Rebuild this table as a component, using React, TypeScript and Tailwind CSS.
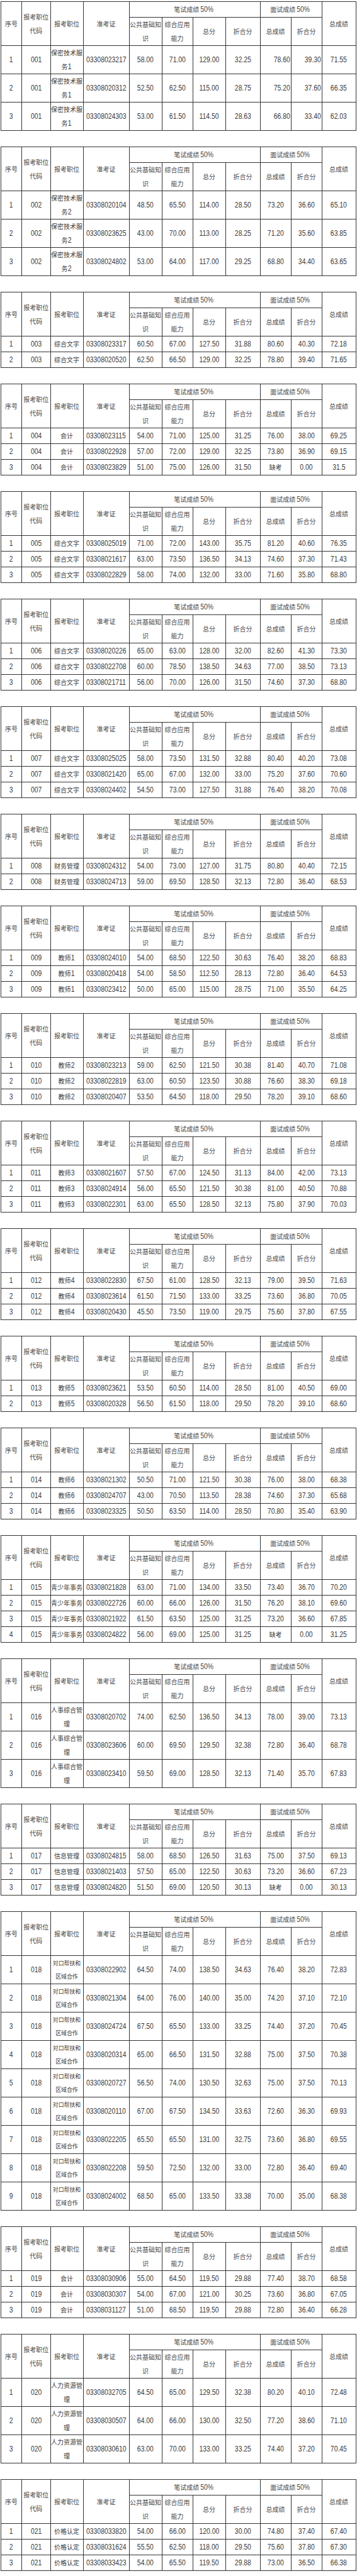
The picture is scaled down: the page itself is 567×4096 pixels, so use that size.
import React from "react";

type Row = string[];

const CJK = /([\u3400-\u9fff\uff00-\uffef]+)/;

function Txt({ s, small, right }: { s: string; small?: boolean; right?: boolean }) {
  const lines = s.split("\n");
  return (
    <>
      {lines.map((line, li) => (
        <React.Fragment key={li}>
          {li > 0 && <br />}
          {line.split(CJK).map((part, i) =>
            part === "" ? null : CJK.test(part) ? (
              <span
                key={i}
                className={
                  (small ? "text-[8.9px] " : "text-[10px] ") +
                  "font-['Noto_Sans_CJK_SC',sans-serif]"
                }
              >
                {part}
              </span>
            ) : (
              <span
                key={i}
                className={
                  "inline-block scale-x-[0.82] " + (right ? "origin-right" : "origin-center")
                }
              >
                {part}
              </span>
            )
          )}
        </React.Fragment>
      ))}
    </>
  );
}

function Cell({
  cls,
  right,
  children,
}: {
  cls: string;
  right?: boolean;
  children: React.ReactNode;
}) {
  return (
    <div
      className={
        cls +
        " flex items-center overflow-hidden whitespace-nowrap border-r border-b border-[#343434] " +
        (right ? "justify-end pr-[1px]" : "justify-center")
      }
    >
      <div className={right ? "text-right" : "text-center"}>{children}</div>
    </div>
  );
}

function ScoreTable({
  rows,
  pos,
  double,
  small,
  rightInterview,
}: {
  rows: Row[];
  pos: string;
  double?: boolean;
  small?: boolean;
  rightInterview?: boolean;
}) {
  const h = double ? "h-[45px]" : "h-[25px]";
  return (
    <div className="ml-[1px] w-[564.5px] grid grid-cols-[33px_45.5px_52px_73px_52px_49px_52px_55px_49px_49px_54px] border-l border-t border-[#343434] text-[12.7px] leading-[21px] text-[#3a3a3a] font-['Liberation_Sans',sans-serif]">
      <Cell cls="row-span-2 text-[#4a4a4a]">
        <Txt s="序号" />
      </Cell>
      <Cell cls="row-span-2 text-[#4a4a4a]">
        <Txt s={"报考职位\n代码"} />
      </Cell>
      <Cell cls="row-span-2 text-[#4a4a4a]">
        <Txt s="报考职位" />
      </Cell>
      <Cell cls="row-span-2 text-[#4a4a4a]">
        <Txt s="准考证" />
      </Cell>
      <Cell cls="col-span-4 h-[25px] text-[#4a4a4a]">
        <Txt s="笔试成绩50%" />
      </Cell>
      <Cell cls="col-span-2 h-[25px] text-[#4a4a4a]">
        <Txt s="面试成绩50%" />
      </Cell>
      <Cell cls="row-span-2 text-[#4a4a4a]">
        <Txt s="总成绩" />
      </Cell>
      <Cell cls="h-[45px] text-[#4a4a4a]">
        <Txt s={"公共基础知\n识"} />
      </Cell>
      <Cell cls="h-[45px] text-[#4a4a4a]">
        <Txt s={"综合应用\n能力"} />
      </Cell>
      <Cell cls="h-[45px] text-[#4a4a4a]">
        <Txt s="总分" />
      </Cell>
      <Cell cls="h-[45px] text-[#4a4a4a]">
        <Txt s="折合分" />
      </Cell>
      <Cell cls="h-[45px] text-[#4a4a4a]">
        <Txt s="总成绩" />
      </Cell>
      <Cell cls="h-[45px] text-[#4a4a4a]">
        <Txt s="折合分" />
      </Cell>
      {rows.map((r, i) => (
        <React.Fragment key={i}>
          <Cell cls={h}>
            <Txt s={r[0]} />
          </Cell>
          <Cell cls={h}>
            <Txt s={r[1]} />
          </Cell>
          <Cell cls={h}>
            <Txt s={pos} small={small} />
          </Cell>
          <Cell cls={h}>
            <Txt s={r[2]} />
          </Cell>
          <Cell cls={h}>
            <Txt s={r[3]} />
          </Cell>
          <Cell cls={h}>
            <Txt s={r[4]} />
          </Cell>
          <Cell cls={h}>
            <Txt s={r[5]} />
          </Cell>
          <Cell cls={h}>
            <Txt s={r[6]} />
          </Cell>
          <Cell cls={h} right={rightInterview}>
            <Txt s={r[7]} right={rightInterview} />
          </Cell>
          <Cell cls={h} right={rightInterview}>
            <Txt s={r[8]} right={rightInterview} />
          </Cell>
          <Cell cls={h}>
            <Txt s={r[9]} />
          </Cell>
        </React.Fragment>
      ))}
    </div>
  );
}

type T = { pos: string; double?: boolean; small?: boolean; right?: boolean; rows: Row[] };

const tables: T[] = [
  {
    pos: "保密技术服\n务1",
    double: true,
    right: true,
    rows: [
      ["1", "001", "03308023217", "58.00", "71.00", "129.00", "32.25", "78.60", "39.30", "71.55"],
      ["2", "001", "03308020312", "52.50", "62.50", "115.00", "28.75", "75.20", "37.60", "66.35"],
      ["3", "001", "03308024303", "53.00", "61.50", "114.50", "28.63", "66.80", "33.40", "62.03"],
    ],
  },
  {
    pos: "保密技术服\n务2",
    double: true,
    rows: [
      ["1", "002", "03308020104", "48.50", "65.50", "114.00", "28.50", "73.20", "36.60", "65.10"],
      ["2", "002", "03308023625", "43.00", "70.00", "113.00", "28.25", "71.20", "35.60", "63.85"],
      ["3", "002", "03308024802", "53.00", "64.00", "117.00", "29.25", "68.80", "34.40", "63.65"],
    ],
  },
  {
    pos: "综合文字",
    rows: [
      ["1", "003", "03308023317", "60.50", "67.00", "127.50", "31.88", "80.60", "40.30", "72.18"],
      ["2", "003", "03308020520", "62.50", "66.50", "129.00", "32.25", "78.80", "39.40", "71.65"],
    ],
  },
  {
    pos: "会计",
    rows: [
      ["1", "004", "03308023115", "54.00", "71.00", "125.00", "31.25", "76.00", "38.00", "69.25"],
      ["2", "004", "03308022928", "57.00", "72.00", "129.00", "32.25", "73.80", "36.90", "69.15"],
      ["3", "004", "03308023829", "51.00", "75.00", "126.00", "31.50", "缺考", "0.00", "31.5"],
    ],
  },
  {
    pos: "综合文字",
    rows: [
      ["1", "005", "03308025019", "71.00", "72.00", "143.00", "35.75", "81.20", "40.60", "76.35"],
      ["2", "005", "03308021617", "63.00", "73.50", "136.50", "34.13", "74.60", "37.30", "71.43"],
      ["3", "005", "03308022829", "58.00", "74.00", "132.00", "33.00", "71.60", "35.80", "68.80"],
    ],
  },
  {
    pos: "综合文字",
    rows: [
      ["1", "006", "03308020226", "65.00", "63.00", "128.00", "32.00", "82.60", "41.30", "73.30"],
      ["2", "006", "03308022708", "60.00", "78.50", "138.50", "34.63", "77.00", "38.50", "73.13"],
      ["3", "006", "03308021711", "56.00", "70.00", "126.00", "31.50", "74.60", "37.30", "68.80"],
    ],
  },
  {
    pos: "综合文字",
    rows: [
      ["1", "007", "03308025025", "58.00", "73.50", "131.50", "32.88", "80.40", "40.20", "73.08"],
      ["2", "007", "03308021420", "65.00", "67.00", "132.00", "33.00", "75.20", "37.60", "70.60"],
      ["3", "007", "03308024402", "54.50", "73.00", "127.50", "31.88", "76.40", "38.20", "70.08"],
    ],
  },
  {
    pos: "财务管理",
    rows: [
      ["1", "008", "03308024312", "54.00", "73.00", "127.00", "31.75", "80.80", "40.40", "72.15"],
      ["2", "008", "03308024713", "59.00", "69.50", "128.50", "32.13", "72.80", "36.40", "68.53"],
    ],
  },
  {
    pos: "教师1",
    rows: [
      ["1", "009", "03308024010", "54.00", "68.50", "122.50", "30.63", "76.40", "38.20", "68.83"],
      ["2", "009", "03308020418", "54.00", "58.50", "112.50", "28.13", "72.80", "36.40", "64.53"],
      ["3", "009", "03308023412", "50.00", "65.00", "115.00", "28.75", "71.00", "35.50", "64.25"],
    ],
  },
  {
    pos: "教师2",
    rows: [
      ["1", "010", "03308023213", "59.00", "62.50", "121.50", "30.38", "81.40", "40.70", "71.08"],
      ["2", "010", "03308022819", "63.00", "60.50", "123.50", "30.88", "76.60", "38.30", "69.18"],
      ["3", "010", "03308020407", "53.50", "64.50", "118.00", "29.50", "78.20", "39.10", "68.60"],
    ],
  },
  {
    pos: "教师3",
    rows: [
      ["1", "011", "03308021607", "57.50", "67.00", "124.50", "31.13", "84.00", "42.00", "73.13"],
      ["2", "011", "03308024914", "56.00", "65.50", "121.50", "30.38", "81.00", "40.50", "70.88"],
      ["3", "011", "03308022301", "63.00", "65.50", "128.50", "32.13", "75.80", "37.90", "70.03"],
    ],
  },
  {
    pos: "教师4",
    rows: [
      ["1", "012", "03308022830", "67.50", "61.00", "128.50", "32.13", "79.00", "39.50", "71.63"],
      ["2", "012", "03308023614", "61.50", "71.50", "133.00", "33.25", "73.60", "36.80", "70.05"],
      ["3", "012", "03308020430", "45.50", "73.50", "119.00", "29.75", "75.60", "37.80", "67.55"],
    ],
  },
  {
    pos: "教师5",
    rows: [
      ["1", "013", "03308023621", "53.50", "60.50", "114.00", "28.50", "81.00", "40.50", "69.00"],
      ["2", "013", "03308020328", "56.50", "61.50", "118.00", "29.50", "78.20", "39.10", "68.60"],
    ],
  },
  {
    pos: "教师6",
    rows: [
      ["1", "014", "03308021302", "50.50", "71.00", "121.50", "30.38", "76.00", "38.00", "68.38"],
      ["2", "014", "03308024707", "43.00", "70.50", "113.50", "28.38", "74.60", "37.30", "65.68"],
      ["3", "014", "03308023325", "50.50", "63.50", "114.00", "28.50", "70.80", "35.40", "63.90"],
    ],
  },
  {
    pos: "青少年事务",
    rows: [
      ["1", "015", "03308021828", "63.00", "71.00", "134.00", "33.50", "73.40", "36.70", "70.20"],
      ["2", "015", "03308022726", "60.00", "66.00", "126.00", "31.50", "76.20", "38.10", "69.60"],
      ["3", "015", "03308021922", "61.50", "63.50", "125.00", "31.25", "73.20", "36.60", "67.85"],
      ["4", "015", "03308024822", "56.00", "69.00", "125.00", "31.25", "缺考", "0.00", "31.25"],
    ],
  },
  {
    pos: "人事综合管\n理",
    double: true,
    rows: [
      ["1", "016", "03308020702", "74.00", "62.50", "136.50", "34.13", "78.00", "39.00", "73.13"],
      ["2", "016", "03308023606", "60.00", "69.50", "129.50", "32.38", "72.80", "36.40", "68.78"],
      ["3", "016", "03308023410", "59.50", "69.00", "128.50", "32.13", "71.40", "35.70", "67.83"],
    ],
  },
  {
    pos: "信息管理",
    rows: [
      ["1", "017", "03308024815", "58.00", "68.50", "126.50", "31.63", "75.00", "37.50", "69.13"],
      ["2", "017", "03308021403", "57.50", "65.00", "122.50", "30.63", "73.20", "36.60", "67.23"],
      ["3", "017", "03308024820", "51.50", "69.00", "120.50", "30.13", "缺考", "0.00", "30.13"],
    ],
  },
  {
    pos: "对口帮扶和\n区域合作",
    double: true,
    small: true,
    rows: [
      ["1", "018", "03308022902", "64.50", "74.00", "138.50", "34.63", "76.40", "38.20", "72.83"],
      ["2", "018", "03308021304", "64.00", "76.00", "140.00", "35.00", "74.20", "37.10", "72.10"],
      ["3", "018", "03308024724", "67.50", "65.50", "133.00", "33.25", "74.40", "37.20", "70.45"],
      ["4", "018", "03308020314", "65.00", "66.50", "131.50", "32.88", "75.00", "37.50", "70.38"],
      ["5", "018", "03308020727", "56.50", "74.00", "130.50", "32.63", "75.00", "37.50", "70.13"],
      ["6", "018", "03308020110", "67.00", "67.50", "134.50", "33.63", "72.60", "36.30", "69.93"],
      ["7", "018", "03308022205", "65.50", "65.50", "131.00", "32.75", "73.60", "36.80", "69.55"],
      ["8", "018", "03308022208", "59.50", "72.50", "132.00", "33.00", "72.80", "36.40", "69.40"],
      ["9", "018", "03308024002", "68.50", "65.00", "133.50", "33.38", "70.00", "35.00", "68.38"],
    ],
  },
  {
    pos: "会计",
    rows: [
      ["1", "019", "03308030906", "55.00", "64.50", "119.50", "29.88", "77.40", "38.70", "68.58"],
      ["2", "019", "03308030307", "54.00", "67.00", "121.00", "30.25", "73.60", "36.80", "67.05"],
      ["3", "019", "03308031127", "51.00", "68.50", "119.50", "29.88", "72.80", "36.40", "66.28"],
    ],
  },
  {
    pos: "人力资源管\n理",
    double: true,
    rows: [
      ["1", "020", "03308032705", "64.50", "65.00", "129.50", "32.38", "80.20", "40.10", "72.48"],
      ["2", "020", "03308030507", "64.00", "66.00", "130.00", "32.50", "77.20", "38.60", "71.10"],
      ["3", "020", "03308030610", "63.00", "70.00", "133.00", "33.25", "74.40", "37.20", "70.45"],
    ],
  },
  {
    pos: "价格认定",
    rows: [
      ["1", "021", "03308033820", "54.00", "66.00", "120.00", "30.00", "74.80", "37.40", "67.40"],
      ["2", "021", "03308031624", "55.50", "62.50", "118.00", "29.50", "75.60", "37.80", "67.30"],
      ["3", "021", "03308033423", "54.00", "65.50", "119.50", "29.88", "73.00", "36.50", "66.38"],
    ],
  },
];

export default function App() {
  return (
    <div className="w-[567px] bg-white pt-[2px] pb-[2px] flex flex-col gap-[25px]">
      {tables.map((t, i) => (
        <ScoreTable
          key={i}
          rows={t.rows}
          pos={t.pos}
          double={t.double}
          small={t.small}
          rightInterview={t.right}
        />
      ))}
    </div>
  );
}
